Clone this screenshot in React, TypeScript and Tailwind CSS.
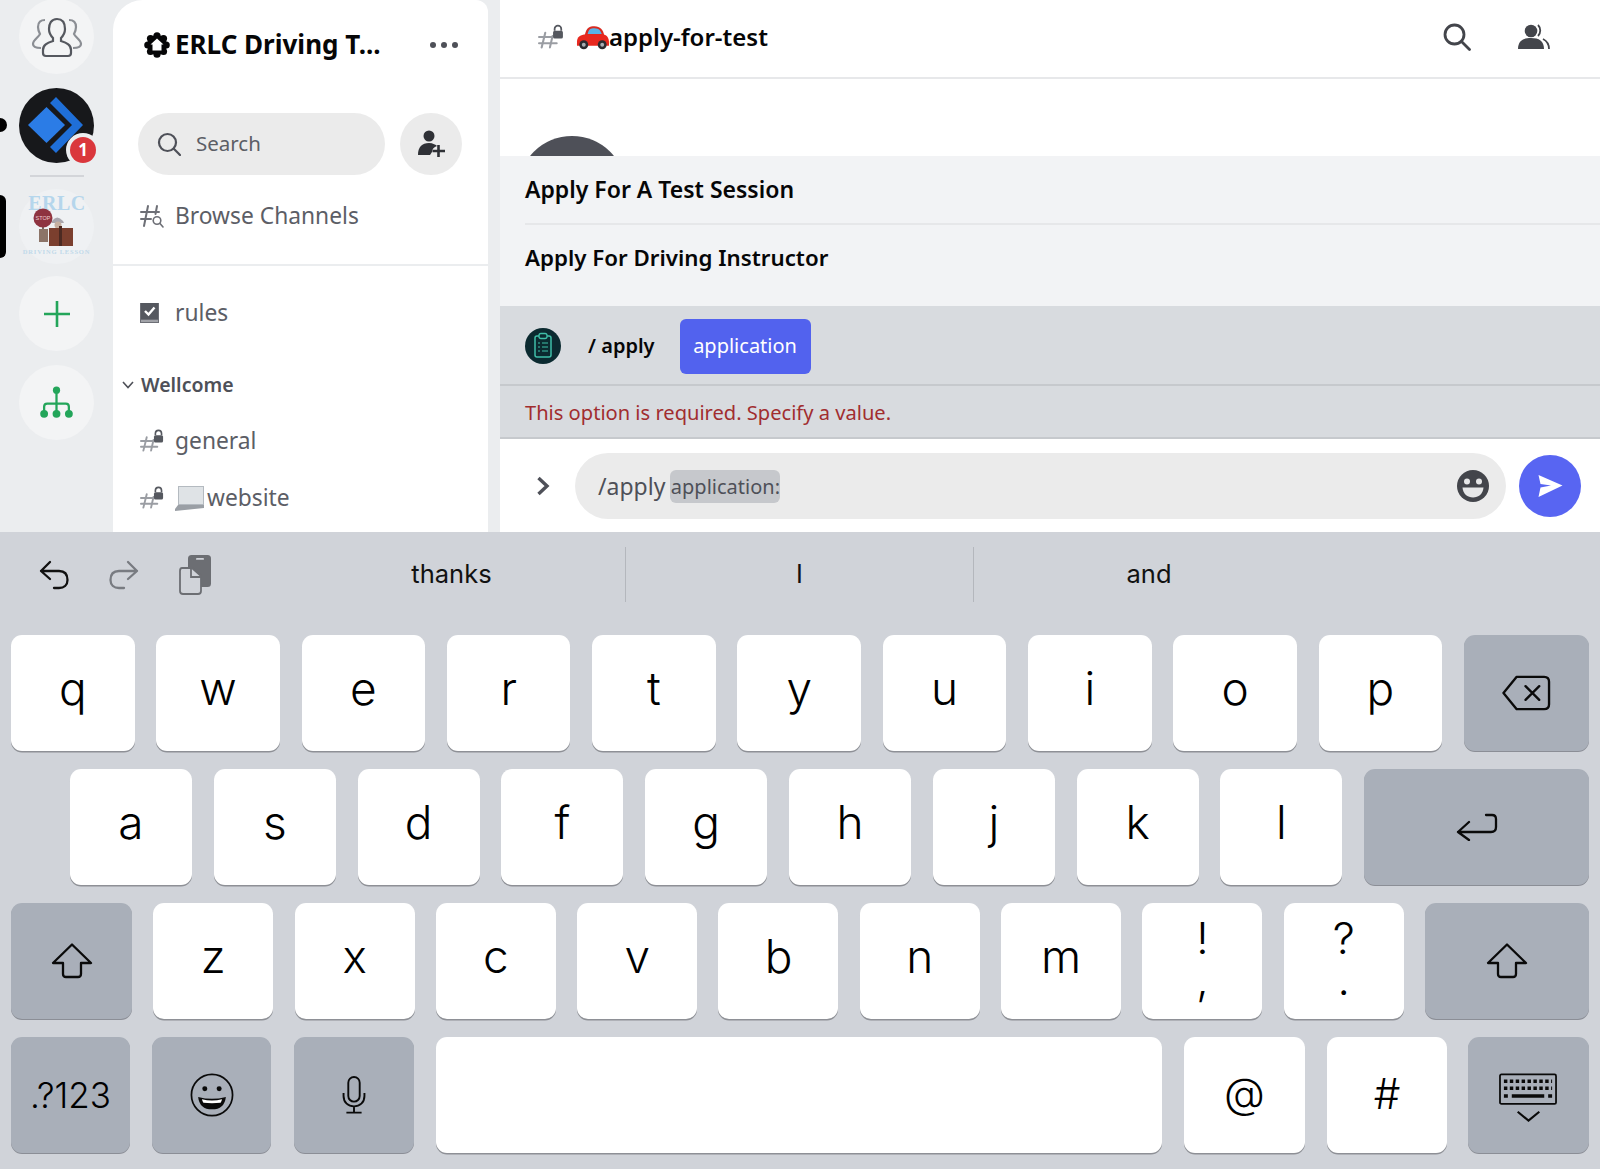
import React from "react";

const UI = { fontFamily: '"Noto Sans", "Open Sans", sans-serif' };
const KB = { fontFamily: 'Inter, "Liberation Sans", sans-serif' };

function HashLock({ className = "" }: { className?: string }) {
  return (
    <svg viewBox="0 0 26 24" className={className} fill="none">
      <g stroke="#9a9da3" strokeWidth="2" strokeLinecap="round">
        <path d="M7 8 L3.5 22" />
        <path d="M14 11 L11.5 22" />
        <path d="M1 12 H13" />
        <path d="M1 18 H18" />
      </g>
      <path d="M16 6 V4.2 a3.2 3.2 0 0 1 6.4 0 V6" stroke="#55585f" strokeWidth="1.7" />
      <rect x="14.5" y="6" width="9.5" height="7.5" rx="1.6" fill="#55585f" />
    </svg>
  );
}

function CarEmoji() {
  return (
    <svg viewBox="0 0 34 26" className="w-[33px] h-[26px] shrink-0">
      <path d="M9 11 C11 3 14 2 19 2 C25 2 28 6 29 11 Z" fill="#d92a20" />
      <path d="M12 10 C13 5 15 4 19 4 C24 4 25.500 7 26.500 10 Z" fill="#58b4e8" />
      <path d="M1 18 C1 13 5 10.500 10 10.500 H28 C32 11 34 14 34 19 V22 H1 Z" fill="#e8281f" />
      <circle cx="8" cy="21" r="4.600" fill="#2b2b30" />
      <circle cx="8" cy="21" r="2" fill="#a8adb3" />
      <circle cx="27" cy="21" r="4.600" fill="#2b2b30" />
      <circle cx="27" cy="21" r="2" fill="#a8adb3" />
    </svg>
  );
}

function LaptopEmoji() {
  return (
    <svg viewBox="0 0 29 26" className="w-[29px] h-[26px] shrink-0">
      <rect x="3" y="1" width="26" height="19" fill="#b4bac0" />
      <rect x="4" y="2" width="24" height="17" fill="#dfe3e6" />
      <path d="M3 20 H29 V23 L0 26 V24 Z" fill="#9a9fa5" />
    </svg>
  );
}

function ServerLogo() {
  return (
    <svg viewBox="0 0 75 75" className="w-full h-full">
      <circle cx="37.500" cy="37.500" r="37.500" fill="#17181b" />
      <path d="M37 9 L64 37 L37 65 L31 59 L53 37 L31 15 Z" fill="#1f6fd8" />
      <path d="M27.500 19 L46 37 L27.500 55 L9 37 Z" fill="#2b7ce6" />
    </svg>
  );
}

function ErlcLogo() {
  return (
    <svg viewBox="0 0 75 75" className="w-full h-full">
      <circle cx="37.500" cy="37.500" r="37.500" fill="#eff1f3" />
      <text x="38" y="21" textAnchor="middle" fontFamily="Liberation Serif, serif" fontWeight="700" fontSize="20" fill="#b5d6ec" letterSpacing="0.5">ERLC</text>
      <rect x="23" y="36" width="2" height="14" fill="#7a6a62" />
      <circle cx="24" cy="29" r="9.500" fill="#8e3340" />
      <text x="24" y="31" textAnchor="middle" fontFamily="Liberation Sans, sans-serif" fontSize="5.500" fill="#eeccd0">STOP</text>
      <rect x="20" y="40" width="9" height="13" fill="#8c7468" />
      <path d="M33 32 Q38 25 44 32 L45 34 H33 Z" fill="#a9a6ad" />
      <circle cx="39" cy="36" r="3.500" fill="#c6b0a0" />
      <rect x="30" y="39" width="24" height="18" fill="#7b3f2e" />
      <rect x="40" y="37" width="3" height="20" fill="#4c2a22" />
      <text x="37.500" y="65" textAnchor="middle" fontFamily="Liberation Serif, serif" fontWeight="700" fontSize="6.500" letterSpacing="0.8" fill="#c0d9ea">DRIVING LESSON</text>
    </svg>
  );
}

function RailCircle({ children, className = "" }: { children?: React.ReactNode; className?: string }) {
  return (
    <div className={`w-[75px] h-[75px] rounded-full bg-[#f3f4f5] flex items-center justify-center ${className}`}>{children}</div>
  );
}

function Rail() {
  return (
    <div className="w-[113px] shrink-0 flex flex-col items-center relative">
      <RailCircle className="-mt-[1px]">
        <svg viewBox="0 0 52 42" className="w-[52px] h-[42px]" fill="none" stroke="#55585f" strokeWidth="2.200">
          <path d="M26 3 c6 0 8 5 8 10 c0 4 -2 7 -4 9 v3 c6 2 10 4 10 9 v3 c0 2 -1 3 -3 3 H15 c-2 0 -3 -1 -3 -3 v-3 c0 -5 4 -7 10 -9 v-3 c-2 -2 -4 -5 -4 -9 c0 -5 2 -10 8 -10 Z" />
          <path d="M14 4 c-4 0 -7 2 -7 7 c0 3 1 5 2 7 c-1 3 -7 6 -7 10 c0 3 3 4 8 4" stroke="#8b8e94" />
          <path d="M38 4 c4 0 7 2 7 7 c0 3 -1 5 -2 7 c1 3 7 6 7 10 c0 3 -3 4 -8 4" stroke="#8b8e94" />
        </svg>
      </RailCircle>
      <div className="absolute left-0 top-[118px] w-[7px] h-[14px] bg-black rounded-r-full" />
      <div className="mt-[14px] relative w-[75px] h-[75px]">
        <ServerLogo />
        <div className="absolute left-[47px] top-[45px] w-[34px] h-[34px] rounded-full bg-[#ebedef] flex items-center justify-center">
          <div className="w-[26px] h-[26px] rounded-full bg-[#da373c] text-white text-[17px] font-bold flex items-center justify-center" style={UI}>1</div>
        </div>
      </div>
      <div className="w-[54px] h-[2px] bg-[#d3d5d9] mt-[12px]" />
      <div className="absolute left-0 top-[195px] w-[6px] h-[63px] bg-black rounded-r-[6px]" />
      <div className="w-[75px] h-[75px] mt-[12px]"><ErlcLogo /></div>
      <RailCircle className="mt-[12px]">
        <svg viewBox="0 0 26 26" className="w-[26px] h-[26px]" stroke="#23a55a" strokeWidth="2.600"><path d="M13 0 V26 M0 13 H26" /></svg>
      </RailCircle>
      <RailCircle className="mt-[14px]">
        <svg viewBox="0 0 32 32" className="w-[33px] h-[33px]" fill="#23a55a" stroke="none">
          <circle cx="16" cy="4" r="3.500" />
          <circle cx="4" cy="27" r="3.800" />
          <circle cx="16" cy="27" r="3.800" />
          <circle cx="28" cy="27" r="3.800" />
          <path d="M16 4 V27 M4 27 V20 Q4 17 7 17 H25 Q28 17 28 20 V27" fill="none" stroke="#23a55a" strokeWidth="2.200" />
        </svg>
      </RailCircle>
    </div>
  );
}

function ChannelRow({ icon, children, className = "" }: { icon: React.ReactNode; children: React.ReactNode; className?: string }) {
  return (
    <div className={`flex items-center h-[40px] pl-[27px] text-[22.800px] text-[#4e5058] ${className}`}>
      <div className="w-[35px] shrink-0 flex items-center">{icon}</div>
      {children}
    </div>
  );
}

function ChannelPanel() {
  return (
    <div className="w-[375px] shrink-0 bg-white rounded-tl-[30px] rounded-tr-[12px] flex flex-col" style={UI}>
      <div className="h-[90px] flex items-center pl-[31px] pr-[30px]">
        <svg viewBox="0 0 26 26" className="w-[26px] h-[26px] shrink-0">
          <g fill="#060607">
            <circle cx="13" cy="13" r="10" />
            <circle cx="13" cy="3.800" r="3.600" />
            <circle cx="13" cy="22.200" r="3.600" />
            <circle cx="3.800" cy="13" r="3.600" />
            <circle cx="22.200" cy="13" r="3.600" />
            <circle cx="6.500" cy="6.500" r="3.600" />
            <circle cx="19.500" cy="6.500" r="3.600" />
            <circle cx="6.500" cy="19.500" r="3.600" />
            <circle cx="19.500" cy="19.500" r="3.600" />
          </g>
          <path d="M13 6.500 L19.500 12.500 H17.500 V18.500 H8.500 V12.500 H6.500 Z" fill="#fff" />
        </svg>
        <span className="ml-[5px] -mt-[2px] text-[26px] font-bold text-[#060607] whitespace-nowrap">ERLC Driving T...</span>
        <div className="ml-auto flex gap-[5px]">
          <div className="w-[6px] h-[6px] rounded-full bg-[#4e5058]" />
          <div className="w-[6px] h-[6px] rounded-full bg-[#4e5058]" />
          <div className="w-[6px] h-[6px] rounded-full bg-[#4e5058]" />
        </div>
      </div>
      <div className="mt-[23px] h-[62px] flex pl-[25px] gap-[15px]">
        <div className="w-[247px] rounded-full bg-[#ebebeb] flex items-center pl-[19px]">
          <svg viewBox="0 0 24 24" className="w-[24px] h-[24px]" fill="none" stroke="#4e5058" strokeWidth="2.200" strokeLinecap="round"><circle cx="10.500" cy="10.500" r="8.500" /><path d="M16.800 16.800 L23 23" /></svg>
          <span className="ml-[15px] -mt-[2px] text-[20.500px] text-[#5c5e66]">Search</span>
        </div>
        <div className="w-[62px] h-[62px] rounded-full bg-[#ebebeb] flex items-center justify-center">
          <svg viewBox="0 0 30 28" className="w-[30px] h-[28px]">
            <circle cx="13" cy="6" r="5.500" fill="#2f3136" />
            <path d="M2 25 C2 17 6 13 13 13 C17 13 20 15 21 16 C18 17 16 19 16 22 L14 25 Z" fill="#2f3136" />
            <path d="M22.500 15 V27 M16.500 21 H29" stroke="#2f3136" strokeWidth="2.600" />
          </svg>
        </div>
      </div>
      <ChannelRow className="mt-[21px]" icon={
        <svg viewBox="0 0 24 24" className="w-[24px] h-[24px]" fill="none" stroke="#6d6f76" strokeWidth="2" strokeLinecap="round">
          <path d="M8 2 L4 22 M17 2 L15.500 10 M1 8 H19 M1 15 H11" />
          <circle cx="17" cy="16.500" r="3.800" strokeWidth="1.600" /><path d="M20 19.500 L23 23" strokeWidth="1.600" />
        </svg>
      }>
        <span className="text-[#5c5e66]">Browse Channels</span>
      </ChannelRow>
      <div className="h-[2px] bg-[#ebedef] mt-[28px]" />
      <ChannelRow className="mt-[27px]" icon={
        <svg viewBox="0 0 20 22" className="w-[20px] h-[22px]">
          <path d="M0 1 H19 V21 H0 Z" fill="#6d6f76" />
          <path d="M1 1 H18 V17 H1 Z" fill="#55585f" />
          <path d="M1 19 H18" stroke="#d6d7da" strokeWidth="1" />
          <path d="M5 9 L8.500 12.500 L14.500 5.500" fill="none" stroke="#fff" strokeWidth="2.400" />
        </svg>
      }>
        <span className="text-[#5c5e66]">rules</span>
      </ChannelRow>
      <div className="mt-[38px] h-[28px] flex items-center pl-[9px]">
        <svg viewBox="0 0 12 8" className="w-[12px] h-[8px]" fill="none" stroke="#4e5058" strokeWidth="1.600"><path d="M1 1 L6 6.500 L11 1" /></svg>
        <span className="ml-[7px] text-[19.500px] font-semibold text-[#4e5058]">Wellcome</span>
      </div>
      <ChannelRow className="mt-[22px]" icon={<HashLock className="w-[25px] h-[24px]" />}>
        <span className="text-[#5c5e66]">general</span>
      </ChannelRow>
      <ChannelRow className="mt-[17px]" icon={<HashLock className="w-[25px] h-[24px]" />}>
        <LaptopEmoji />
        <span className="ml-[3px] text-[#5c5e66]">website</span>
      </ChannelRow>
    </div>
  );
}

function Chat() {
  return (
    <div className="flex-1 flex flex-col bg-white" style={UI}>
      <div className="h-[79px] border-b-2 border-[#e7e8ea] flex items-center pl-[38px] pr-[50px] pb-[4px] shrink-0">
        <HashLock className="w-[27px] h-[26px]" />
        <div className="ml-[11px] flex items-center">
          <CarEmoji />
          <span className="text-[24px] font-semibold text-[#060607]">apply-for-test</span>
        </div>
        <div className="ml-auto flex items-center gap-[47px]">
          <svg viewBox="0 0 28 28" className="w-[28px] h-[28px]" fill="none" stroke="#43454b" strokeWidth="2.800" strokeLinecap="round"><circle cx="11.500" cy="11.500" r="9.500" /><path d="M18.500 18.500 L26.500 26.500" /></svg>
          <svg viewBox="0 0 32 26" className="w-[32px] h-[26px]">
            <circle cx="13" cy="7" r="6.300" fill="#43454b" />
            <path d="M0 25 C0 17 5 14 13 14 C21 14 26 17 26 25 Z" fill="#43454b" />
            <path d="M20 1 C23 4 23 9 20 12" fill="none" stroke="#43454b" strokeWidth="1.800" />
            <path d="M25 15 C29 17 31 20 31 25" fill="none" stroke="#43454b" strokeWidth="1.800" />
          </svg>
        </div>
      </div>
      <div className="h-[77px] overflow-hidden pt-[57px] pl-[18px] shrink-0">
        <div className="w-[108px] h-[108px] rounded-full bg-[#4e5058]" />
      </div>
      <div className="h-[150px] bg-[#f2f3f5] pl-[25px] shrink-0 flex flex-col font-semibold text-[#060607]">
        <div className="h-[69px] border-b-2 border-[#e6e7e9] flex items-center text-[23px]">Apply For A Test Session</div>
        <div className="h-[66px] flex items-center text-[22.300px]">Apply For Driving Instructor</div>
      </div>
      <div className="h-[133px] bg-[#d8dbdf] border-b-2 border-[#c6c9cd] shrink-0 flex flex-col">
        <div className="h-[80px] border-b-2 border-[#c6c9cd] flex items-center pl-[25px] pt-[2px]">
          <svg viewBox="0 0 36 36" className="w-[36px] h-[36px] shrink-0">
            <circle cx="18" cy="18" r="18" fill="#0b2a30" />
            <rect x="10" y="8" width="16" height="21" rx="2" fill="none" stroke="#3fbfa8" strokeWidth="1.500" />
            <rect x="14" y="5.500" width="8" height="5" rx="2" fill="#0b2a30" stroke="#3fbfa8" strokeWidth="1.300" />
            <path d="M17 15 H23 M17 19 H23 M17 23 H23 M13 15 H15 M13 19 H15 M13 23 H15" stroke="#3fbfa8" strokeWidth="1.200" />
          </svg>
          <span className="ml-[27px] text-[20px] font-semibold text-[#060607]">/ apply</span>
          <div className="ml-[25px] w-[131px] h-[55px] rounded-[6px] bg-[#5262ee] text-white text-[20px] flex items-center justify-center">application</div>
        </div>
        <div className="flex-1 flex items-center pl-[25px] pt-[4px] text-[20.100px] text-[#a12d2f]">This option is required. Specify a value.</div>
      </div>
      <div className="flex-1 flex items-center pl-[75px] pr-[19px] relative">
        <svg viewBox="0 0 14 20" className="absolute left-[36px] top-[37px] w-[14px] h-[20px]" fill="none" stroke="#4e5058" strokeWidth="3.400"><path d="M2.500 2 L11 10 L2.500 18" /></svg>
        <div className="w-[931px] h-[66px] rounded-full bg-[#ebebeb] flex items-center pl-[23px] pr-[17px]">
          <span className="text-[23px] text-[#4e5058] pt-[2px]">/apply</span>
          <span className="ml-[5px] w-[110px] h-[33px] rounded-[6px] bg-[#c6c8cc] text-[20px] text-[#4e5058] flex items-center justify-center whitespace-nowrap mt-[2px]">application:</span>
          <svg viewBox="0 0 32 32" className="ml-auto w-[32px] h-[32px]">
            <circle cx="16" cy="16" r="16" fill="#43454b" />
            <circle cx="10" cy="11.500" r="3" fill="#e6e7e8" />
            <circle cx="22" cy="11.500" r="3" fill="#e6e7e8" />
            <path d="M5.500 17.500 H26.500 C26 24 21.500 27.500 16 27.500 C10.500 27.500 6 24 5.500 17.500 Z" fill="#e6e7e8" />
          </svg>
        </div>
        <div className="ml-[13px] w-[62px] h-[62px] rounded-full bg-[#5865f2] flex items-center justify-center">
          <svg viewBox="0 0 26 24" className="w-[26px] h-[24px]"><path d="M1.500 1 L25.500 11.500 L1.500 23 L3.500 13.500 L14 11.500 L3.500 10 Z" fill="#fff" /></svg>
        </div>
      </div>
    </div>
  );
}

function Key({ w, dark, children, className = "" }: { w: string; dark?: boolean; children: React.ReactNode; className?: string }) {
  return (
    <div className={`${w} h-[116px] rounded-[11px] flex items-center justify-center shrink-0 text-black font-light ${dark ? "bg-[#a9afb9] shadow-[0_1px_0_#8b8e96]" : "bg-white shadow-[0_1.500px_0_#8e9096]"} ${className}`}>
      {children}
    </div>
  );
}

const Shift = () => (
  <svg viewBox="0 0 42 36" className="w-[42px] h-[36px]" fill="none" stroke="#0a0a0a" strokeWidth="2.300" strokeLinejoin="round"><path d="M21 1.500 L40 20 H30 V31 Q30 34 27 34 H15 Q12 34 12 31 V20 H2 Z" /></svg>
);

function Letter({ c }: { c: string }) {
  return <span className="text-[46px] leading-none -mt-[10px]">{c}</span>;
}

function Keyboard() {
  return (
    <div className="flex-1 bg-[#d0d3d9] flex flex-col" style={KB}>
      <div className="h-[103px] flex items-center pb-[18px] shrink-0">
        <div className="w-[278px] shrink-0 pl-[39px] flex items-center gap-[40px]">
          <svg viewBox="0 0 30 30" className="w-[30px] h-[30px]" fill="none" stroke="#111" strokeWidth="2.300" strokeLinecap="round" strokeLinejoin="round"><path d="M11 2 L2 11 L11 19 M2 11 H20 C26 11 28.500 15 28.500 20 C28.500 25 25 28 20 28 H15" /></svg>
          <svg viewBox="0 0 30 30" className="w-[30px] h-[30px]" fill="none" stroke="#787b81" strokeWidth="2.300" strokeLinecap="round" strokeLinejoin="round"><path d="M19 2 L28 11 L19 19 M28 11 H10 C4 11 1.500 15 1.500 20 C1.500 25 5 28 10 28 H15" /></svg>
          <svg viewBox="0 0 32 40" className="w-[32px] h-[40px]">
            <rect x="9" y="0" width="23" height="32" rx="3.500" fill="#6c6e73" />
            <rect x="17" y="3" width="8" height="1.800" rx="0.900" fill="#d0d3d9" />
            <path d="M3 13 H13 L22 21 V36 Q22 39 19 39 H4 Q1 39 1 36 V16 Q1 13 3 13 Z" fill="#d0d3d9" stroke="#6c6e73" strokeWidth="1.800" />
            <path d="M12 13 V22 H22" fill="none" stroke="#6c6e73" strokeWidth="1.800" />
          </svg>
        </div>
        <div className="w-[348px] h-[55px] border-r border-[#b4b7bd] flex items-center justify-center text-[25.500px] text-[#111]">thanks</div>
        <div className="w-[348px] h-[55px] border-r border-[#b4b7bd] flex items-center justify-center text-[25.500px] text-[#111]">I</div>
        <div className="w-[350px] h-[55px] flex items-center justify-center text-[25.500px] text-[#111]">and</div>
      </div>
      <div className="flex gap-[21.800px] pl-[11px]">
        {["q", "w", "e", "r", "t", "y", "u", "i", "o", "p"].map((c) => (
          <Key key={c} w="w-[123.500px]"><Letter c={c} /></Key>
        ))}
        <Key dark w="w-[125px]">
          <svg viewBox="0 0 50 36" className="w-[49px] h-[36px]" fill="none" stroke="#0a0a0a" strokeWidth="2.400" strokeLinejoin="round" strokeLinecap="round"><path d="M15 1.500 H43 Q48 1.500 48 6.500 V29.500 Q48 34.500 43 34.500 H15 L1.500 18 Z" /><path d="M24 11 L38 25 M38 11 L24 25" /></svg>
        </Key>
      </div>
      <div className="flex gap-[21.800px] pl-[70px] mt-[18px]">
        {["a", "s", "d", "f", "g", "h", "j", "k", "l"].map((c) => (
          <Key key={c} w="w-[122px]"><Letter c={c} /></Key>
        ))}
        <Key dark w="w-[225px]">
          <svg viewBox="0 0 42 28" className="w-[42px] h-[28px]" fill="none" stroke="#0a0a0a" strokeWidth="2.300" strokeLinecap="round" strokeLinejoin="round"><path d="M30 2 H36 Q40 2 40 6 V14 Q40 19 35 19 H2 M13 9 L2 19 L13 27" /></svg>
        </Key>
      </div>
      <div className="flex gap-[21.300px] pl-[11px] mt-[18px]">
        <Key dark w="w-[121px]"><Shift /></Key>
        {["z", "x", "c", "v", "b", "n", "m"].map((c) => (
          <Key key={c} w="w-[120px]"><Letter c={c} /></Key>
        ))}
        <Key w="w-[120px]">
          <span className="text-center text-[44px] leading-[41px] -mt-[4px]">!<br />,</span>
        </Key>
        <Key w="w-[120px]">
          <span className="text-center text-[44px] leading-[41px] -mt-[4px]">?<br />.</span>
        </Key>
        <Key dark w="w-[164px]"><Shift /></Key>
      </div>
      <div className="flex pl-[11px] mt-[18px]">
        <Key dark w="w-[119px]"><span className="text-[35px]">.?123</span></Key>
        <Key dark w="w-[119px] ml-[22px]">
          <svg viewBox="0 0 46 46" className="w-[44px] h-[44px]" fill="none" stroke="#0a0a0a" strokeWidth="1.800">
            <circle cx="23" cy="23" r="21.500" />
            <circle cx="15.500" cy="16.500" r="2.600" fill="#0a0a0a" stroke="none" />
            <circle cx="30.500" cy="16.500" r="2.600" fill="#0a0a0a" stroke="none" />
            <path d="M8.500 25 Q23 29 37.500 25 Q36 38 23 38 Q10 38 8.500 25 Z" fill="#0a0a0a" stroke="none" />
            <path d="M12.500 27.500 Q23 30 33.500 27.500 Q33 30 32 31 Q23 32 14 31 Q13 30 12.500 27.500 Z" fill="#fff" stroke="none" />
          </svg>
        </Key>
        <Key dark w="w-[120px] ml-[23px]">
          <svg viewBox="0 0 24 40" className="w-[24px] h-[38px]" fill="none" stroke="#0a0a0a" strokeWidth="2"><rect x="6" y="1" width="12" height="26" rx="6" /><path d="M1 18 V21 C1 28 6 32 12 32 C18 32 23 28 23 21 V18 M12 32 V38 M4 38.500 H20" /></svg>
        </Key>
        <Key w="w-[726px] ml-[22px]"><span /></Key>
        <Key w="w-[121px] ml-[22px]"><span className="text-[42px] leading-none -mt-[4px]">@</span></Key>
        <Key w="w-[120px] ml-[22px]"><span className="text-[42px] leading-none -mt-[2px]">#</span></Key>
        <Key dark w="w-[121px] ml-[21px]">
          <svg viewBox="0 0 60 52" className="w-[59px] h-[52px] mt-[8px]" fill="none" stroke="#0a0a0a">
            <rect x="1" y="1" width="57" height="30" rx="1.500" strokeWidth="1.800" />
            <path d="M5 8 H54 M5 15 H54" strokeWidth="3.500" strokeDasharray="3.500 2.500" />
            <path d="M5 23 H9 M50 23 H54" strokeWidth="3.500" />
            <path d="M13 23 H46" strokeWidth="3.500" />
            <path d="M19 39 L30 48 L41 39" strokeWidth="2.200" />
          </svg>
        </Key>
      </div>
    </div>
  );
}

export default function App() {
  return (
    <div className="w-[1600px] h-[1169px] flex flex-col overflow-hidden">
      <div className="h-[532px] shrink-0 flex bg-[#ebedef] overflow-hidden">
        <Rail />
        <ChannelPanel />
        <div className="w-[12px] shrink-0" />
        <Chat />
      </div>
      <Keyboard />
    </div>
  );
}
